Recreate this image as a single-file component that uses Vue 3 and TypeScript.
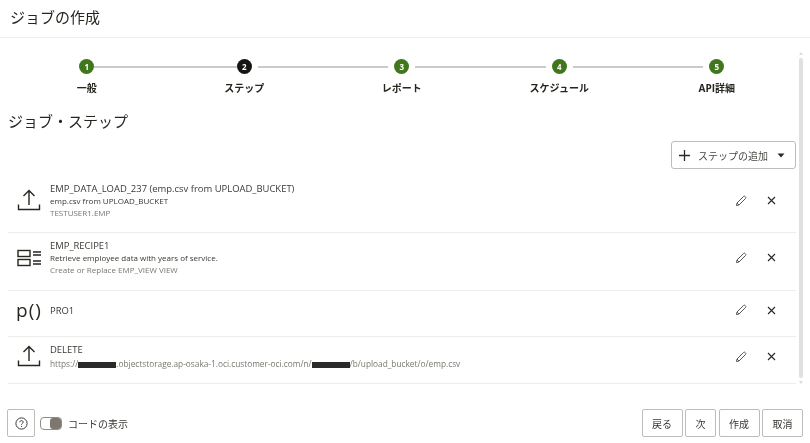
<template>
  <div class="page">
    <header class="page-header">ジョブの作成</header>

    <div class="body">
      <main class="content">
        <ol class="stepper">
          <li v-for="(step, i) in steps" :key="step.label" class="step">
            <div class="step__track">
              <span
                class="step__line step__line--before"
                :class="{ 'step__line--hidden': i === 0, 'step__line--join': i === 1 }"
              />
              <span class="step__dot" :class="{ 'step__dot--current': i === 1 }">{{ i + 1 }}</span>
              <span
                class="step__line step__line--after"
                :class="{ 'step__line--hidden': i === steps.length - 1, 'step__line--join': i === 0 }"
              />
            </div>
            <span class="step__label">{{ step.label }}</span>
          </li>
        </ol>

        <h2 class="section-title">ジョブ・ステップ</h2>

        <div class="toolbar">
          <button class="add-button" type="button">
            <svg width="13" height="13" viewBox="0 0 13 13" class="add-button__plus">
              <path d="M6.5 1v11M1 6.5h11" stroke="#2b2a28" stroke-width="1.3" fill="none" />
            </svg>
            <span>ステップの追加</span>
            <svg width="8" height="5" viewBox="0 0 8 5" class="add-button__caret">
              <path d="M0.5 0.5h7L4 4.5z" fill="#2b2a28" />
            </svg>
          </button>
        </div>

        <ul class="job-list">
          <li v-for="job in jobs" :key="job.name" class="job" :class="`job--${job.key}`">
            <div class="job__icon">
              <svg v-if="job.icon === 'upload'" width="24" height="23" viewBox="0 0 24 23" fill="none" stroke="#26251f" stroke-width="1.4">
                <path d="M12 1.5V16M6.5 7 12 1.5 17.5 7" />
                <path d="M1.5 15.5v5h21v-5" />
              </svg>
              <svg v-else-if="job.icon === 'recipe'" width="24" height="18" viewBox="0 0 24 18" fill="none" stroke="#26251f" stroke-width="1.4">
                <rect x="1" y="1.5" width="12" height="6" />
                <rect x="1" y="10.5" width="12" height="6" />
                <path d="M16 3h8M16 6h8M16 12h8M16 15h8" />
              </svg>
              <span v-else class="job__proc">p()</span>
            </div>
            <div class="job__text">
              <div class="job__name">{{ job.name }}</div>
              <div v-if="job.detail" class="job__detail">{{ job.detail }}</div>
              <div v-if="job.target" class="job__target">{{ job.target }}</div>
              <div v-if="job.url" class="job__target job__target--url">
                https://<i class="redact" />.objectstorage.ap-osaka-1.oci.customer-oci.com/n/<i class="redact" />/b/upload_bucket/o/emp.csv
              </div>
            </div>
            <div class="job__actions">
              <svg width="12" height="12" viewBox="0 0 12 12" fill="none" stroke="#5a5854" stroke-width="1">
                <path d="M1.4 10.6 2 8l6.6-6.6a1 1 0 0 1 1.4 0l.6.6a1 1 0 0 1 0 1.4L4 10z" />
                <path d="M2 8l2 2" />
              </svg>
              <svg width="9" height="9" viewBox="0 0 9 9" fill="none" stroke="#26251f" stroke-width="1.1">
                <path d="M1 1l7 7M8 1 1 8" />
              </svg>
            </div>
          </li>
        </ul>
      </main>

      <div class="scrollbar">
        <span class="scrollbar__arrow scrollbar__arrow--up" />
        <span class="scrollbar__thumb" />
        <span class="scrollbar__arrow scrollbar__arrow--down" />
      </div>
    </div>

    <footer class="page-footer">
      <button class="btn btn--help" type="button">
        <svg width="13" height="13" viewBox="0 0 13 13" fill="none" stroke="#3c3a36">
          <circle cx="6.5" cy="6.5" r="5.6" />
          <path d="M4.8 5.2c0-1 .8-1.6 1.7-1.6s1.7.6 1.7 1.5c0 1.3-1.7 1.3-1.7 2.6" />
          <path d="M6.5 8.9v1" />
        </svg>
      </button>
      <span class="toggle"><span class="toggle__knob" /></span>
      <span class="toggle-label">コードの表示</span>
      <div class="page-footer__spacer" />
      <button v-for="action in actions" :key="action" class="btn" type="button">{{ action }}</button>
    </footer>
  </div>
</template>

<script setup lang="ts">
interface Job {
  key: string
  name: string
  icon: 'upload' | 'recipe' | 'proc'
  detail?: string
  target?: string
  url?: boolean
}

const steps = [
  { label: '一般' },
  { label: 'ステップ' },
  { label: 'レポート' },
  { label: 'スケジュール' },
  { label: 'API詳細' },
]

const jobs: Job[] = [
  {
    key: 'load',
    name: 'EMP_DATA_LOAD_237 (emp.csv from UPLOAD_BUCKET)',
    icon: 'upload',
    detail: 'emp.csv from UPLOAD_BUCKET',
    target: 'TESTUSER1.EMP',
  },
  {
    key: 'recipe',
    name: 'EMP_RECIPE1',
    icon: 'recipe',
    detail: 'Retrieve employee data with years of service.',
    target: 'Create or Replace EMP_VIEW VIEW',
  },
  { key: 'proc', name: 'PRO1', icon: 'proc' },
  { key: 'delete', name: 'DELETE', icon: 'upload', url: true },
]

const actions = ['戻る', '次', '作成', '取消']
</script>

<style>
html,
body {
  margin: 0;
  background: #fff;
}
</style>

<style scoped>
.page {
  width: 810px;
  height: 443px;
  display: flex;
  flex-direction: column;
  overflow: hidden;
  box-sizing: border-box;
  color: #26251f;
  font-family: "Open Sans", "Noto Sans CJK JP", sans-serif;
  filter: blur(0.35px);
}

.page-header {
  height: 38px;
  padding-left: 10px;
  box-sizing: border-box;
  border-bottom: 1px solid #f0efed;
  font-size: 15px;
  line-height: 35px;
  flex: none;
}

.body {
  display: flex;
  height: 348px;
  flex: none;
}

.content {
  width: 788px;
  margin-left: 8px;
}

.stepper {
  list-style: none;
  margin: 21px 0 0;
  padding: 0;
  display: grid;
  grid-template-columns: repeat(5, 157.5px);
}

.step {
  display: flex;
  flex-direction: column;
  align-items: center;
}

.step__track {
  width: 100%;
  display: flex;
  align-items: center;
}

/* fixed half width with padding, so the gaps beside a dot can't push it off centre */
.step__line {
  width: calc(50% - 7.5px);
  flex: none;
  height: 2px;
  box-sizing: border-box;
  background: #cbcac8;
  background-clip: content-box;
}

.step__line--before {
  padding-right: 6px;
}

.step__line--after {
  padding-left: 6px;
}

.step__line--join {
  padding: 0;
}

.step__line--hidden {
  visibility: hidden;
}

.step__dot {
  width: 15px;
  height: 15px;
  flex: none;
  border-radius: 50%;
  background: #40771c;
  color: #fff;
  font-size: 8px;
  font-weight: 700;
  line-height: 15px;
  text-align: center;
}

.step__dot--current {
  background: #161513;
}

.step__label {
  margin-top: 7px;
  font-size: 10px;
  font-weight: 700;
  line-height: 15px;
}

.section-title {
  margin: 14px 0 0;
  font-size: 15px;
  font-weight: 400;
  line-height: 22px;
}

.toolbar {
  display: flex;
  justify-content: flex-end;
  margin-top: 9px;
}

.add-button {
  width: 125px;
  height: 28px;
  display: flex;
  align-items: center;
  padding: 0;
  background: #fff;
  border: 1px solid #bdbcba;
  border-radius: 3px;
  color: #4a4843;
  font: inherit;
  font-size: 10px;
}

.add-button__plus {
  margin: 0 7px 0 6px;
}

.add-button__caret {
  margin-left: 9px;
}

.job-list {
  list-style: none;
  margin: 0;
  padding: 0;
}

.job {
  display: flex;
  align-items: center;
  box-sizing: border-box;
  border-bottom: 1px solid #eeedeb;
}

.job--load {
  padding: 13px 0 13px;
}

.job--recipe {
  padding: 6px 0 14px;
}

.job--proc {
  padding: 7px 0 14px;
}

.job--delete {
  padding: 6px 0 13px;
}

.job__icon {
  width: 42px;
  display: flex;
  justify-content: center;
  flex: none;
}

.job__proc {
  font-size: 19px;
  line-height: 24px;
  letter-spacing: 1px;
}

.job__text {
  flex: 1;
  font-size: 8px;
  line-height: 12px;
  min-width: 0;
}

.job__name {
  font-size: 9.45px;
  line-height: 13px;
  color: #3a3833;
}

.job__detail {
  color: #3a3833;
}

.job__target {
  color: #78766f;
}

.job__target--url {
  font-size: 8.3px;
  margin-top: 2px;
}

.redact {
  display: inline-block;
  width: 38px;
  height: 6px;
  vertical-align: -1px;
  background: #2b2a28;
}

.job__actions {
  width: 61px;
  display: flex;
  align-items: center;
  gap: 20px;
  flex: none;
}

.scrollbar {
  width: 6px;
  margin-left: 2px;
  display: flex;
  flex-direction: column;
  align-items: center;
  padding-top: 14px;
}

.scrollbar__thumb {
  width: 4px;
  height: 320px;
  margin: 3px 0;
  border-radius: 2px;
  background: #e0e0e0;
}

.scrollbar__arrow {
  width: 0;
  height: 0;
  border-left: 2px solid transparent;
  border-right: 2px solid transparent;
}

.scrollbar__arrow--up {
  border-bottom: 3px solid #dcdcdc;
}

.scrollbar__arrow--down {
  border-top: 3px solid #dcdcdc;
}

.page-footer {
  display: flex;
  align-items: center;
  padding: 23px 7px 0;
}

.page-footer__spacer {
  flex: 1;
}

.btn {
  height: 28px;
  padding: 0 9.5px;
  margin-left: 2.5px;
  box-sizing: border-box;
  background: #fff;
  border: 1px solid #bdbcba;
  border-radius: 2px;
  color: #3a3833;
  font: inherit;
  font-size: 10px;
}

.btn--help {
  width: 28px;
  padding: 0;
  margin-left: 0;
  display: flex;
  align-items: center;
  justify-content: center;
}

.toggle {
  width: 22px;
  height: 13px;
  margin-left: 5px;
  box-sizing: border-box;
  border: 1px solid #8f8c86;
  border-radius: 4px;
  display: flex;
  justify-content: flex-end;
  background: #fff;
}

.toggle__knob {
  width: 11px;
  background: #7d7770;
  border-radius: 3px;
}

.toggle-label {
  margin-left: 6px;
  font-size: 10px;
  color: #3a3833;
}
</style>
